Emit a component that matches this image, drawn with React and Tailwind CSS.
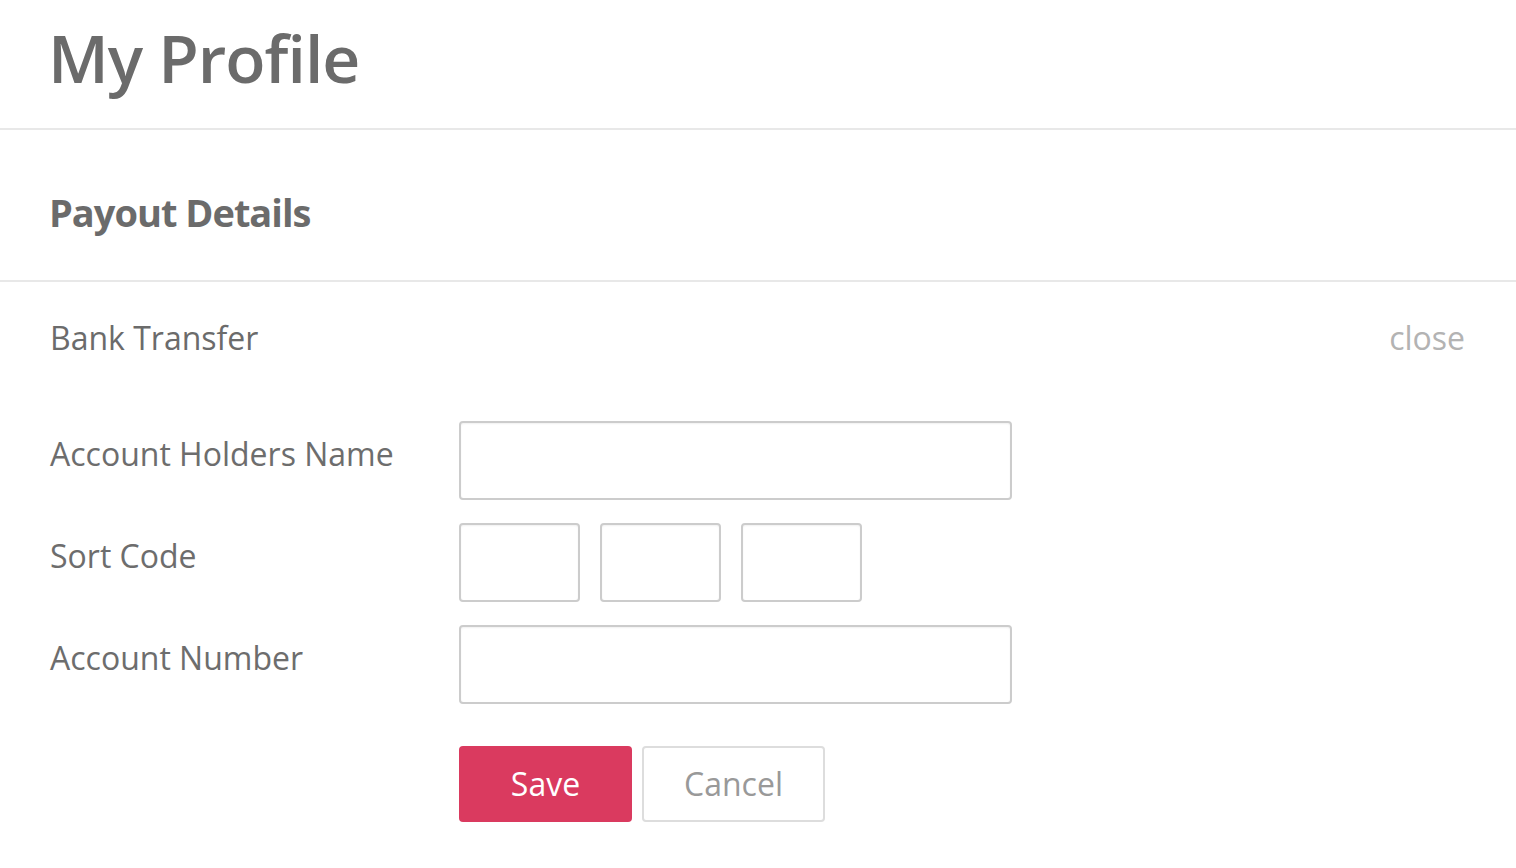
export default function App() {
  const font = { fontFamily: '"Open Sans", "Liberation Sans", sans-serif' };
  const inputCls =
    "h-[79px] border-2 border-[#cccccc] rounded-[4px] bg-white outline-none shadow-[inset_0_1px_2px_rgba(0,0,0,0.06)]";
  return (
    <div className="w-[1516px] h-[868px] bg-white text-[#6d6d6d] overflow-hidden" style={font}>
      <header className="h-[130px] border-b-2 border-[#e8e8e8] pl-[48px] pt-[12px]">
        <h1 className="text-[66px] font-semibold leading-[90px] text-[#6b6b6b] tracking-[-1px]">My Profile</h1>
      </header>
      <section className="h-[152px] border-b-2 border-[#e8e8e8] pl-[49px] pt-[56px]">
        <h2 className="text-[38px] font-bold leading-[52px] text-[#6b6b6b] tracking-[-1px]">Payout Details</h2>
      </section>
      <section className="px-[50px] pt-[34px]">
        <div className="flex items-start justify-between">
          <span className="text-[32px] leading-[44px] text-[#6b6b6b]">Bank Transfer</span>
          <span className="text-[32px] leading-[44px] text-[#b3b3b3] pr-[1px]">close</span>
        </div>
        <form className="mt-[61px] flex flex-col gap-[23px]" onSubmit={(e) => e.preventDefault()}>
          <div className="flex items-start">
            <label className="w-[409px] shrink-0 text-[32px] leading-[44px] pt-[11px]">Account Holders Name</label>
            <input className={`${inputCls} w-[553px] px-4 text-[28px]`} />
          </div>
          <div className="flex items-start">
            <label className="w-[409px] shrink-0 text-[32px] leading-[44px] pt-[11px]">Sort Code</label>
            <div className="flex gap-[20px]">
              <input className={`${inputCls} w-[121px] px-3 text-[28px]`} />
              <input className={`${inputCls} w-[121px] px-3 text-[28px]`} />
              <input className={`${inputCls} w-[121px] px-3 text-[28px]`} />
            </div>
          </div>
          <div className="flex items-start">
            <label className="w-[409px] shrink-0 text-[32px] leading-[44px] pt-[11px]">Account Number</label>
            <input className={`${inputCls} w-[553px] px-4 text-[28px]`} />
          </div>
          <div className="flex items-start pl-[409px] mt-[19px] gap-[10px]">
            <button
              type="submit"
              className="w-[173px] h-[76px] rounded-[4px] bg-[#da3a5f] text-white text-[32px] leading-[44px]"
            >
              Save
            </button>
            <button
              type="button"
              className="w-[183px] h-[76px] rounded-[4px] border-2 border-[#dddddd] bg-white text-[#999999] text-[32px] leading-[44px]"
            >
              Cancel
            </button>
          </div>
        </form>
      </section>
    </div>
  );
}
